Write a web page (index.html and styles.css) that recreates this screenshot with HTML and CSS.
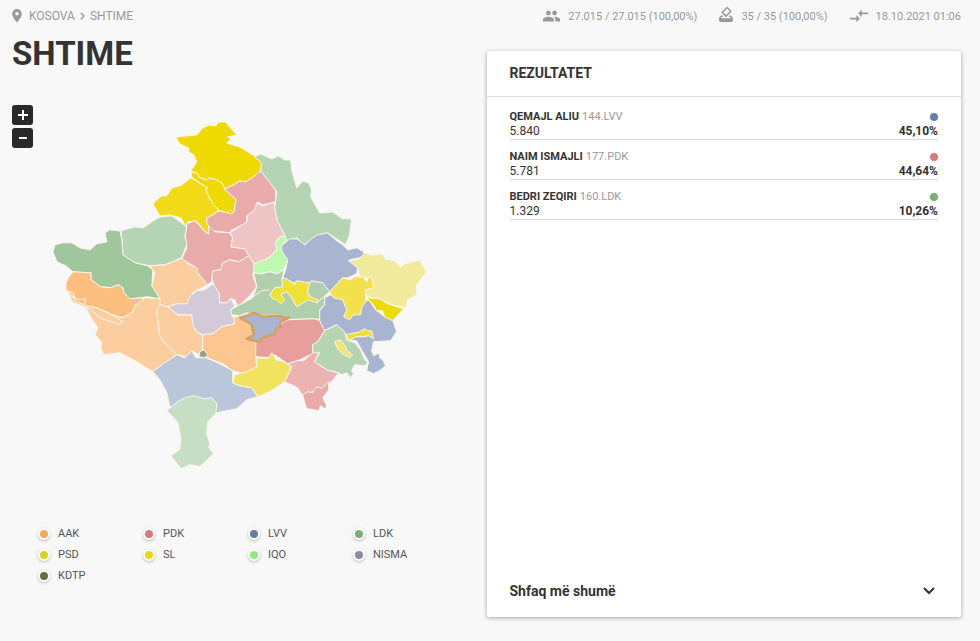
FILE: index.html
```html
<!DOCTYPE html>
<html lang="sq">
<head>
<meta charset="utf-8">
<title>Shtime</title>
<meta name="viewport" content="width=device-width, initial-scale=1">
<link rel="stylesheet" href="styles.css">
</head>
<body>
<header class="topbar">
  <nav class="crumbs">
    <svg class="pin" viewBox="0 0 10 14" aria-hidden="true"><path fill-rule="evenodd" d="M5 0a4.8 4.8 0 0 0-4.8 4.8C.2 8.400 5 13.500 5 13.500S9.800 8.400 9.800 4.800A4.800 4.800 0 0 0 5 0zm0 6.600a1.800 1.800 0 1 1 0-3.600 1.800 1.800 0 0 1 0 3.600z"/></svg>
    <a href="#">KOSOVA</a>
    <svg class="sep" viewBox="0 0 5 8" aria-hidden="true"><path d="M.8.8 4 4 .8 7.200"/></svg>
    <a href="#">SHTIME</a>
  </nav>
  <ul class="stats">
    <li><svg class="people" viewBox="1 5 22 14" aria-hidden="true"><path d="M16 11c1.660 0 2.990-1.340 2.990-3S17.660 5 16 5s-3 1.340-3 3 1.340 3 3 3zm-8 0c1.660 0 2.990-1.340 2.990-3S9.660 5 8 5 5 6.340 5 8s1.340 3 3 3zm0 2c-2.330 0-7 1.170-7 3.500V19h14v-2.500c0-2.330-4.670-3.500-7-3.500zm8 0c-.29 0-.62.020-.97.050 1.160.84 1.970 1.970 1.970 3.450V19h6v-2.500c0-2.330-4.670-3.500-7-3.500z"/></svg><span>27.015 / 27.015 (100,00%)</span></li>
    <li><svg class="ballot" viewBox="3 1 18 21" aria-hidden="true"><path d="M18 13h-.68l-2 2h1.910L19 17H5l1.780-2h2.050l-2-2H6l-3 3v4c0 1.100.89 2 1.990 2H19c1.100 0 2-.89 2-2v-4l-3-3zm-1-5.050-4.950 4.950-3.540-3.540 4.950-4.950L17 7.950zm-4.240-5.660L6.390 8.660c-.39.39-.39 1.020 0 1.410l4.950 4.950c.39.39 1.020.39 1.410 0l6.360-6.360c.39-.39.39-1.020 0-1.410L14.160 2.300c-.38-.4-1.010-.4-1.400-.01z"/></svg><span>35 / 35 (100,00%)</span></li>
    <li><svg class="arrows" viewBox="2 5 20 14" aria-hidden="true"><path d="M9.010 14H2v2h7.010v3L13 15l-3.990-4v3zm5.980-1v-3H22V8h-7.010V5L11 9l3.990 4z"/></svg><span>18.10.2021 01:06</span></li>
  </ul>
</header>
<main class="layout">
  <section class="region">
    <h1>SHTIME</h1>
    <div class="map">
      <div class="zoom">
        <button type="button" aria-label="Zmadho"><svg viewBox="0 0 10 10"><path d="M5 0v10M0 5h10"/></svg></button>
        <button type="button" aria-label="Zvogëlo"><svg viewBox="0 0 10 10"><path d="M1 5h8"/></svg></button>
      </div>
      <svg class="municipalities" viewBox="12 100 475 390" role="img" aria-label="Harta e komunave">
        <path fill="#eed900" d="M176 137 197 135 203 128 209 125 216 126 219 122 226 122 229 126 237 135 228 137 231 139 227 143 240 147 255 156 262 163 261 171 251 179 245 182 239 181 236 184 225 189 222 183 217 180 210 178 207 180 200 178 197 173 191 171 197 162 194 155 189 152 189 148 180 144Z"/>
        <path fill="#eed900" d="M191 172 197 173 200 178 207 180 210 178 217 180 222 183 225 189 231 195 237 200 235 204 235 211 232 214 224 214 219 210 214 205 209 197 206 190 208 188 197 181 192 177Z"/>
        <path class="line yellow" d="M222 210 226 213 230 210 234 213"/>
        <path fill="#f0db16" d="M191 178 208 188 206 190 209 197 214 205 219 210 213 215 207 218 209 224 209 234 205 232 200 225 196 221 188 222 186 227 181 218 170 215 160 216 156 209 153 204 158 199 162 196 167 196 172 188 182 185Z"/>
        <path fill="#e8abaa" d="M261 171 269 180 276 191 276 202 263 205 258 202 256 210 247 216 247 223 232 230 230 233 214 231 207 224 207 218 213 215 219 211 232 214 235 211 235 204 237 200 231 195 225 189 236 184 239 181 245 182 251 179Z"/>
        <path fill="#e8abaa" d="M187 224 195 221 200 226 205 232 209 234 209 226 215 232 230 233 233 238 231 247 245 249 249 256 239 262 230 260 223 263 221 270 213 271 212 282 207 285 202 278 197 272 195 267 182 259 187 248 185 240Z"/>
        <path fill="#efc4c4" d="M230 233 247 222 248 215 255 210 257 203 263 206 274 202 278 222 282 228 285 236 277 240 277 250 269 258 255 264 249 256 245 249 231 247 233 238Z"/>
        <path fill="#ecb5b4" d="M223 263 230 260 239 262 249 256 255 265 253 275 257 287 251 295 238 307 235 300 231 299 227 303 220 303 219 293 215 287 212 278 213 271 221 270Z"/>
        <path fill="#bdf9b0" d="M286 236 280 237 276 242 277 250 269 258 254 264 254 273 262 274 270 272 278 274 285 268 288 260 282 250 284 243 289 240Z"/>
        <path fill="#b5d4b3" d="M255 157 261 154 272 159 279 156 285 160 291 160 292 170 297 188 303 181 309 183 312 190 311 197 320 213 333 212 343 219 352 219 350 235 346 245 328 233 318 235 313 241 303 245 297 238 288 242 284 233 278 222 275 207 277 192 261 171 262 163Z"/>
        <path fill="#b0d0ad" d="M254 273 262 274 270 272 278 274 284 270 283 278 308 284 312 281 323 283 331 291 325 298 325 305 320 310 322 320 313 319 288 320 280 315 255 316 247 313 240 316 231 315 231 310 238 306 253 298 257 287Z"/>
        <path class="line" d="M252 298 262 291 270 290M318 302 330 292"/>
        <path fill="#a9b5d0" d="M282 246 290 239 297 239 305 245 313 238 318 235 328 233 336 240 343 245 348 250 357 248 364 252 365 257 350 260 358 268 357 274 348 278 343 278 330 292 323 283 312 281 308 284 298 282 294 283 283 278 286 270 288 260 282 251Z"/>
        <path fill="#f0e03a" d="M282 278 287 279 295 285 297 281 310 283 308 291 310 297 318 300 318 303 308 300 304 303 297 307 292 298 287 292 281 295 285 300 281 304 277 300 273 299 270 295 275 288 283 287Z"/>
        <path fill="#b5d4b3" d="M121 231 135 227 143 228 152 222 160 217 172 216 183 224 187 227 185 236 187 244 182 258 173 262 165 265 150 266 135 263 123 255 122 240Z"/>
        <path fill="#9fc79b" d="M53 252 55 245 62 243 72 243 80 248 90 250 97 244 107 242 105 233 110 230 120 231 122 240 123 255 135 263 148 266 153 270 152 286 158 294 160 299 148 297 130 299 124 293 123 288 118 285 111 288 101 287 91 280 91 273 73 272 66 266 57 262Z"/>
        <path fill="#febf7e" d="M73 272 91 273 91 280 101 287 111 288 118 285 123 288 124 293 130 299 145 298 135 306 133 312 123 318 112 315 97 308 85 306 76 302 71 296 66 290 66 283 69 277Z"/>
        <path fill="#fcce9f" d="M68 291 74 294 75 301 86 306 97 308 112 315 123 318 133 312 135 306 145 298 160 299 163 306 157 310 158 321 160 337 168 346 177 355 153 372 137 362 120 353 112 354 104 355 101 349 102 343 95 335 98 328 93 321 88 312 86 308 72 302Z"/>
        <path class="line" d="M71 296 79 300 86 299 84 305M86 307 92 311 100 318 120 325 123 322 116 318 105 311"/>
        <path fill="#fcce9f" d="M150 266 165 265 173 262 182 258 188 264 197 268 199 275 208 285 194 292 187 304 177 304 168 307 160 305 160 299 152 286 155 273Z"/>
        <path fill="#fcce9f" d="M160 305 168 307 178 315 191 315 196 331 204 336 203 350 199 355 192 351 187 357 177 355 168 346 160 337 158 321 157 310Z"/>
        <path fill="#d2cad8" d="M168 307 177 304 187 304 190 297 197 291 205 290 213 284 216 288 219 293 220 303 227 303 231 299 235 306 231 310 232 316 237 320 235 324 222 327 213 334 203 335 197 332 193 325 192 315 178 315Z"/>
        <path fill="#fdc690" d="M203 335 213 334 222 327 235 324 234 317 240 317 246 323 252 325 253 334 248 339 256 343 256 357 257 367 256 373 248 375 233 371 223 364 207 358 203 350Z"/>
        <path fill="#e89f9c" d="M288 320 313 319 322 321 325 331 318 342 313 345 313 354 298 361 288 364 275 355 271 358 256 357 256 343 265 337 276 334 278 326Z"/>
        <path fill="#bac6d9" d="M153 372 165 363 177 355 185 358 192 351 196 358 206 358 220 364 233 371 233 383 240 386 252 388 258 397 247 400 237 409 217 413 170 407 167 393 160 380Z"/>
        <path fill="#999f8b" d="M200 352 204 350 208 355 205 358 199 357Z"/>
        <path fill="#c6dec3" d="M167 411 178 402 185 398 195 396 204 399 212 398 217 404 216 414 208 422 207 435 210 443 209 448 214 454 200 467 190 465 181 469 171 456 180 450 181 437 178 423 171 415Z"/>
        <path fill="#f1e35f" d="M233 383 235 375 247 372 257 367 257 358 268 359 272 353 276 360 284 362 292 367 290 372 285 382 270 392 258 397 252 388 240 386Z"/>
        <path fill="#ebb3b2" d="M288 364 298 361 304 361 313 353 320 351 315 362 327 370 339 373 332 382 322 391 313 392 303 396 298 388 285 382 290 372 292 367Z"/>
        <path fill="#e8abaa" d="M303 395 308 392 313 393 317 387 322 389 329 382 329 390 323 398 327 406 325 409 321 406 319 411 307 409 305 403Z"/>
        <path fill="#a9b5d0" d="M331 295 325 298 325 305 320 311 320 321 325 331 337 325 348 340 357 341 363 352 369 362 367 371 374 374 380 371 386 366 383 360 380 358 380 353 374 356 372 351 374 342 391 341 397 332 393 320 385 317 376 310 370 301Z"/>
        <path fill="#b5d4b1" d="M325 331 337 325 345 332 347 340 355 343 361 350 364 358 368 363 365 366 355 365 352 371 354 374 351 378 347 373 342 375 339 373 327 370 315 362 320 353 313 353 313 345 318 342Z"/>
        <path fill="#f1e99b" d="M349 261 360 259 365 253 373 255 383 254 385 259 395 261 401 267 405 264 420 260 427 272 417 285 417 295 408 300 406 308 392 305 380 299 367 297 366 290 373 287 373 279 360 277 358 268Z"/>
        <path fill="#f2e14a" d="M330 292 343 278 351 280 355 277 363 277 367 282 369 277 373 279 374 288 366 290 366 302 362 308 361 315 354 315 350 320 344 317 347 310 343 300 334 298Z"/>
        <path fill="#ebdc08" d="M367 298 380 299 388 304 404 309 393 321 385 317 383 311 377 311 373 304Z"/>
        <path fill="#eedf3a" d="M346 335 355 333 360 332 365 329 368 331 372 331 374 339 369 336 363 337 356 337 350 341Z"/>
        <path fill="#f1e375" d="M335 342 341 340 346 347 347 351 353 355 350 358 343 354 338 349Z"/>
        <path class="selected" d="M240 318 250 315 255 313 262 317 280 316 284 318 289 318 280 323 281 327 277 328 275 335 265 337 258 342 247 339 254 335 252 325Z"/>
      </svg>
    </div>
    <ul class="legend">
      <li class="aak">AAK</li><li class="pdk">PDK</li><li class="lvv">LVV</li><li class="ldk">LDK</li>
      <li class="psd">PSD</li><li class="sl">SL</li><li class="iqo">IQO</li><li class="nisma">NISMA</li>
      <li class="kdtp">KDTP</li>
    </ul>
  </section>
  <section class="card">
    <h2>REZULTATET</h2>
    <ol class="results">
      <li><div class="row"><p><b>QEMAJL ALIU</b> <small>144.LVV</small></p><i class="dot lvv"></i></div><div class="row"><span>5.840</span><strong>45,10%</strong></div></li>
      <li><div class="row"><p><b>NAIM ISMAJLI</b> <small>177.PDK</small></p><i class="dot pdk"></i></div><div class="row"><span>5.781</span><strong>44,64%</strong></div></li>
      <li><div class="row"><p><b>BEDRI ZEQIRI</b> <small>160.LDK</small></p><i class="dot ldk"></i></div><div class="row"><span>1.329</span><strong>10,26%</strong></div></li>
    </ol>
    <button type="button" class="more"><span>Shfaq më shumë</span><svg viewBox="0 0 12 8" aria-hidden="true"><path d="m1 1 5 5 5-5"/></svg></button>
  </section>
</main>
</body>
</html>
```
FILE: styles.css
```css
*, ::before { box-sizing: border-box; }
body {
  margin: 0;
  min-height: 100vh;
  padding: 0 19px 24px 12px;
  display: flex;
  flex-direction: column;
  background: #f8f8f8;
  color: #333;
  font-family: Roboto, "Liberation Sans", sans-serif;
  font-size: 12px;
}
h1, h2, p, ul, ol { margin: 0; padding: 0; }
ul, ol { list-style: none; }
button { border: 0; font: inherit; color: inherit; cursor: pointer; }

.topbar {
  display: flex;
  justify-content: space-between;
  height: 32px;
  color: #999;
  fill: #999;
}
.crumbs, .stats, .stats li { display: flex; align-items: center; }
.crumbs a { color: inherit; text-decoration: none; }
.pin { width: 10px; height: 14px; margin-right: 7px; }
.sep { width: 5px; height: 8px; margin: 0 5px; fill: none; stroke: #999; stroke-width: 1.5; }
.stats { gap: 22px; font-size: 11px; }
.stats li { gap: 8px; }
.people { width: 17px; height: 12px; }
.ballot { width: 14px; height: 16px; margin-bottom: 4px; }
.arrows { width: 18px; height: 14px; }

.layout {
  flex: 1;
  display: grid;
  grid-template-columns: 1fr 1fr;
}
h1 { font-size: 33px; line-height: 44px; font-weight: 700; }
.map { position: relative; margin-top: 24px; }
.municipalities {
  display: block;
  width: 100%;
  stroke: #fbf6ee;
  stroke-width: 1;
  stroke-linejoin: round;
}
.municipalities .line { fill: none; }
.municipalities .yellow { stroke: #f6ec70; }
.municipalities .selected { fill: #a9b5d0; stroke: #d3a060; stroke-width: 2.5; }
.zoom {
  position: absolute;
  top: 5px;
  left: 0;
  display: grid;
  gap: 3px;
}
.zoom button {
  display: grid;
  place-items: center;
  width: 21px;
  height: 20px;
  padding: 0;
  border-radius: 3px;
  background: #292929;
}
.zoom svg { width: 10px; height: 10px; stroke: #fff; stroke-width: 2; }

.legend {
  display: grid;
  grid-template-columns: repeat(4, 105px);
  row-gap: 1px;
  margin-top: 34px;
  padding-left: 26px;
  font-size: 11px;
  line-height: 20px;
  color: #555;
}
.legend li { display: flex; align-items: center; gap: 8px; }
.legend li::before {
  content: "";
  width: 12px;
  height: 12px;
  border: 2px solid #fff;
  border-radius: 50%;
  background: var(--party);
  box-shadow: 0 1px 3px rgba(0, 0, 0, .25);
}
.aak { --party: #efab57; }
.pdk { --party: #d57b7b; }
.lvv { --party: #667da3; }
.ldk { --party: #7aaf72; }
.psd { --party: #ddd31b; }
.sl { --party: #e8d817; }
.iqo { --party: #91e97f; }
.nisma { --party: #93889a; }
.kdtp { --party: #66703f; }

.card {
  display: flex;
  flex-direction: column;
  margin-top: 19px;
  background: #fff;
  border-radius: 2px;
  box-shadow: 0 1px 4px rgba(0, 0, 0, .35);
}
h2 {
  padding: 0 23px;
  border-bottom: 1px solid #ddd;
  font-size: 14px;
  line-height: 45px;
  font-weight: 700;
}
.results { padding: 12px 23px; }
.results li { margin-bottom: 9px; border-bottom: 1px solid #ddd; }
.row {
  display: flex;
  align-items: center;
  justify-content: space-between;
  height: 15px;
  line-height: 15px;
}
.row b { font-size: 11px; font-weight: 700; }
.row small { font-size: 11px; color: #999; }
.row strong { font-weight: 700; }
.dot { width: 8px; height: 8px; border-radius: 50%; background: var(--party); }
.more {
  display: flex;
  align-items: center;
  justify-content: space-between;
  margin-top: auto;
  padding: 0 26px 0 23px;
  background: none;
  font-size: 14px;
  line-height: 52px;
  font-weight: 700;
}
.more svg { width: 12px; height: 8px; fill: none; stroke: #333; stroke-width: 2; }
```
